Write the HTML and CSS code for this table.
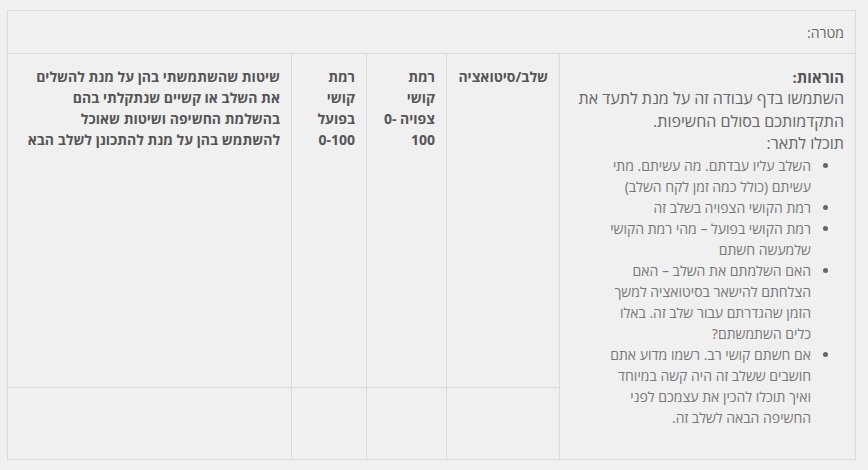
FILE: index.html
```html
<!DOCTYPE html>
<html lang="he" dir="rtl">
<head>
<meta charset="utf-8">
<link rel="stylesheet" href="styles.css">
</head>
<body>
<table class="sheet">
  <colgroup>
    <col class="c-instr">
    <col class="c-stage">
    <col class="c-exp">
    <col class="c-act">
    <col class="c-methods">
  </colgroup>
  <tr class="goal-row">
    <td colspan="5" class="goal">מטרה:</td>
  </tr>
  <tr class="main-row">
    <td rowspan="2" class="instr">
      <div class="instr-title">הוראות:</div>
      <div class="instr-text">השתמשו בדף עבודה זה על מנת לתעד את התקדמותכם בסולם החשיפות.</div>
      <div class="instr-text">תוכלו לתאר:</div>
      <ul class="instr-list">
        <li>השלב עליו עבדתם. מה עשיתם. מתי עשיתם (כולל כמה זמן לקח השלב)</li>
        <li>רמת הקושי הצפויה בשלב זה</li>
        <li>רמת הקושי בפועל – מהי רמת הקושי שלמעשה חשתם</li>
        <li>האם השלמתם את השלב – האם הצלחתם להישאר בסיטואציה למשך הזמן שהגדרתם עבור שלב זה. באלו כלים השתמשתם?</li>
        <li>אם חשתם קושי רב. רשמו מדוע אתם חושבים ששלב זה היה קשה במיוחד ואיך תוכלו להכין את עצמכם לפני החשיפה הבאה לשלב זה.</li>
      </ul>
    </td>
    <td class="head">שלב/סיטואציה</td>
    <td class="head">רמת קושי צפויה -0 100</td>
    <td class="head">רמת קושי בפועל 0-100</td>
    <td class="head">שיטות שהשתמשתי בהן על מנת להשלים את השלב או קשיים שנתקלתי בהם בהשלמת החשיפה ושיטות שאוכל להשתמש בהן על מנת להתכונן לשלב הבא</td>
  </tr>
  <tr class="entry-row">
    <td></td>
    <td></td>
    <td></td>
    <td></td>
  </tr>
</table>
</body>
</html>
```

FILE: styles.css
```css
html, body {
  margin: 0;
  padding: 0;
  background: #f0f0f0;
}

body {
  font-family: "Open Sans", "Noto Sans", sans-serif;
  color: #666;
  padding: 10px 12px 0 9px;
}

.sheet {
  border-collapse: collapse;
  width: 848px;
  table-layout: fixed;
}

.sheet td {
  border: 1px solid #dadada;
  vertical-align: top;
  padding: 12px 11px;
}

.c-instr { width: 296px; }
.c-stage { width: 113px; }
.c-exp { width: 80px; }
.c-act { width: 75px; }
.c-methods { width: 284px; }

.goal-row td.goal {
  height: 43px;
  box-sizing: border-box;
  padding: 0 11px;
  vertical-align: middle;
  font-size: 14px;
  color: #666;
}

.main-row td {
  height: 334px;
  box-sizing: border-box;
}

.entry-row td {
  height: 72px;
  box-sizing: border-box;
}

.sheet td.instr {
  padding-left: 18px;
}

.instr-title {
  font-weight: bold;
  font-size: 15px;
  line-height: 20px;
  color: #555;
  margin-top: 1px;
}

.instr-text {
  font-size: 16px;
  line-height: 22.5px;
  color: #666;
}

.instr-list {
  margin: 0 0 0 21px;
  padding: 0 33px 0 0;
  font-size: 14px;
  line-height: 21px;
  color: #777;
}

.instr-list li::marker {
  color: #666;
}

.head {
  font-weight: bold;
  font-size: 14px;
  line-height: 21px;
  color: #555;
}
```
